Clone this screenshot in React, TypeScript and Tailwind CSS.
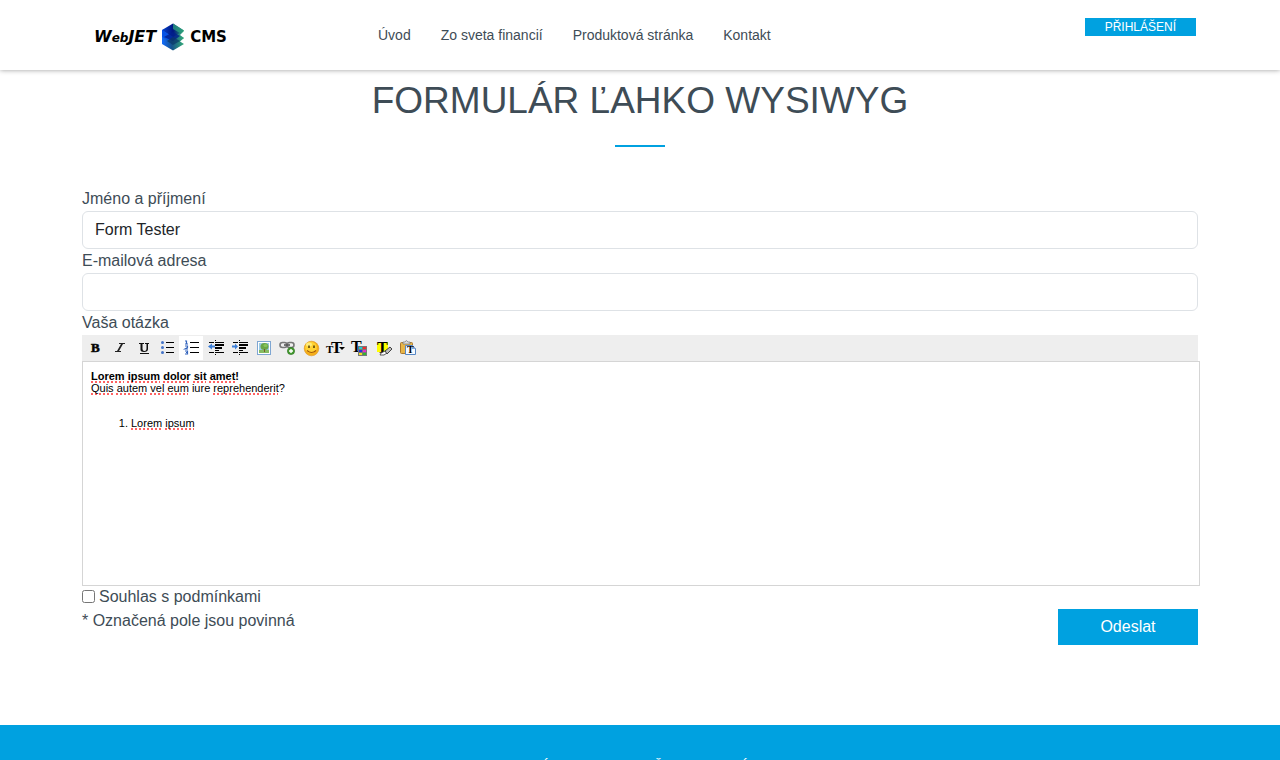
import React from "react";

type Tool = { name: string; icon: React.ReactNode; active?: boolean };

const letter = "font-['Liberation_Serif',serif] font-bold";

function Lines({ xs, w }: { xs: number; w: number[] }) {
  return (
    <>
      {w.map((n, i) => (
        <rect key={i} x={xs} y={2 + i * 5} width={n} height="1" fill="#000" />
      ))}
    </>
  );
}

function IndentLines({ arrow }: { arrow: string }) {
  return (
    <>
      <path d="M7 0h1v1H7zM1 2h5v1H1zM7 2h9v1H7zM7 4h9v2H7zM7 7h7v2H7zM7 10h4v1H7zM1 12h5v1H1zM7 12h9v1H7zM7 14h1v1H7z" fill="#000" />
      <path d={arrow} fill="#3c7fd8" />
    </>
  );
}

const tools: Tool[] = [
  {
    name: "Bold",
    icon: <text x="3" y="12" fontSize="13" stroke="#111" strokeWidth=".6" className={letter}>B</text>,
  },
  {
    name: "Italic",
    icon: <path d="M7 3h6v1h-2L7 11h2v1H3v-1h2l4-7H7z" fill="#222" />,
  },
  {
    name: "Underline",
    icon: (
      <path d="M3 3h5v1H6.500v5q0 2 2 2t2-2V4H9V3h4v1h-1v5q0 3-4 3T4.500 9V4H3zM4 13h9v1H4z" fill="#111" />
    ),
  },
  {
    name: "Bullet list",
    icon: (
      <>
        <Lines xs={6} w={[8, 8, 8]} />
        <g fill="#4474c8">
          <circle cx="2.500" cy="2.500" r="1.500" />
          <circle cx="2.500" cy="7.500" r="1.500" />
          <circle cx="2.500" cy="12.500" r="1.500" />
        </g>
      </>
    ),
  },
  {
    name: "Numbered list",
    active: true,
    icon: (
      <>
        <Lines xs={6} w={[9, 9, 9]} />
        <path d="M1 1h1.500v3M1 4h3M1 6h2.500v1.500L1 9h3M1 11h2.500v3H1M2 12.500h1.500" fill="none" stroke="#3465bd" strokeWidth="1.200" />
      </>
    ),
  },
  { name: "Outdent", icon: <IndentLines arrow="M0 6.500l4-3v2h3v2H4v2z" /> },
  { name: "Indent", icon: <IndentLines arrow="M6 6.500l-3-3v2H0v2h3v2z" /> },
  {
    name: "Image",
    icon: (
      <>
        <rect x="1.500" y="1.500" width="13" height="13" fill="#fff" stroke="#7ea6d2" />
        <path d="M3 3h10v10H3z" fill="#9bcbe5" />
        <path d="M3 10h10v3H3z" fill="#86bb62" />
        <ellipse cx="8.500" cy="6.500" rx="4" ry="3.500" fill="#6aa647" />
        <path d="M8 9h1v3H8z" fill="#765a28" />
        <ellipse cx="9.500" cy="5.500" rx="2" ry="1.500" fill="#85c45b" />
      </>
    ),
  },
  {
    name: "Link",
    icon: (
      <>
        <rect x="0" y="2.500" width="7" height="5" rx="2.500" fill="none" stroke="#777" strokeWidth="1.600" />
        <rect x="7" y="2.500" width="7" height="5" rx="2.500" fill="none" stroke="#777" strokeWidth="1.600" />
        <path d="M4 5h6" stroke="#555" strokeWidth="1.600" />
        <circle cx="11" cy="11" r="3.600" fill="#459b30" stroke="#266f1d" strokeWidth=".6" />
        <path d="M11 9v4M9 11h4" stroke="#fff" strokeWidth="1.400" />
      </>
    ),
  },
  {
    name: "Smiley",
    icon: (
      <>
        <circle cx="7.500" cy="8.500" r="7.300" fill="#f5ae19" stroke="#dd9520" strokeWidth=".6" />
        <circle cx="7" cy="7.500" r="5.800" fill="#ffd335" />
        <ellipse cx="5" cy="4.500" rx="3" ry="2" fill="#ffec78" />
        <path d="M5 5.500v2.500M10 5.500v2.500" stroke="#453000" strokeWidth="1.400" />
        <path d="M3 10.500q4.500 4 9 0" fill="none" stroke="#a45509" strokeWidth="1.100" />
      </>
    ),
  },
  {
    name: "Font size",
    icon: (
      <>
        <text x="-2" y="13" fontSize="11" className={letter}>T</text>
        <text x="3" y="13" fontSize="17" className={letter}>T</text>
        <path d="M11 7h6l-3 3z" />
      </>
    ),
  },
  {
    name: "Text colour",
    icon: (
      <>
        <text x="-1" y="12" fontSize="16" className={letter}>T</text>
        <path d="M6 6h9v10H6z" fill="#777" />
        <path d="M7 7h3v2H7z" fill="#2cc" /><path d="M11 7h3v2h-3z" fill="#f42a2a" />
        <path d="M7 10h3v2H7z" fill="#2432dd" /><path d="M11 10h3v2h-3z" fill="#e42dca" />
        <path d="M7 13h3v2H7z" fill="#f4df20" /><path d="M11 13h3v2h-3z" fill="#31b531" />
      </>
    ),
  },
  {
    name: "Highlight",
    icon: (
      <>
        <path d="M1 2h11v8l-3 2H1z" fill="#ff0" />
        <text x="1" y="13" fontSize="16" className={letter}>T</text>
        <path d="M4 15l1-2 4-2 2 2-3 2z" fill="#fff" stroke="#333" strokeWidth=".8" />
        <path d="M9 11l5-4 2 2-5 5z" fill="#bbb" stroke="#333" strokeWidth=".9" />
      </>
    ),
  },
  {
    name: "Paste text",
    icon: (
      <>
        <rect x=".5" y="2.500" width="12" height="11" rx="1" fill="#e8b546" stroke="#a8772f" />
        <path d="M3 4V2h2q1-3 3 0h2v2z" fill="#ddd" stroke="#777" strokeWidth=".7" />
        <path d="M5.500 5.500h7l3 3v6h-10z" fill="#f5faff" stroke="#5586c5" />
        <path d="M12 5.500v3h3.500" fill="#cce0f8" stroke="#5586c5" strokeWidth=".7" />
        <text x="7" y="13" fontSize="10" className={letter}>T</text>
      </>
    ),
  },
];

function Logo() {
  return (
    <a href="#" aria-label="WebJET CMS" className="flex items-center gap-[5px] font-['DejaVu_Sans',sans-serif] font-bold leading-none text-black">
      <span className="flex items-baseline text-base leading-none italic">
        W<span className="text-xs">eb</span>JET
      </span>
      <svg width="24" height="28" viewBox="0 0 24 28" aria-hidden="true">
        <defs>
          <linearGradient id="lower">
            <stop offset="0" stopColor="#126cff" /><stop offset=".45" stopColor="#16528a" />
            <stop offset="1" stopColor="#35ae78" />
          </linearGradient>
          <linearGradient id="upper">
            <stop offset="0" stopColor="#0543d0" /><stop offset=".5" stopColor="#001780" />
            <stop offset="1" stopColor="#2ca477" />
          </linearGradient>
        </defs>
        <path d="M1 14v7l11 6.500L23 21l-4-2.500 4-3.500-11-4z" fill="url(#lower)" />
        <path d="M1 7v8l11 6 11-6-4-3 4-4-11-4z" fill="url(#lower)" />
        <path d="M1 7l11-6.500L23 7.500 12 14z" fill="url(#upper)" />
        <path d="M1 7l11 7-5 3-6-3z" fill="#0753e6" />
        <path d="M3 14l9-5 7 4-7 5z" fill="#03208c" opacity=".8" />
        <path d="M12 .5L23 7.500l-4 2.500-7-4z" fill="#2c9f7c" opacity=".75" />
        <path d="M6 18l6-4 7 4-7 4z" fill="#0a3768" opacity=".7" />
      </svg>
      <span className="text-[15px] leading-none">CMS</span>
    </a>
  );
}

function Misspelt({ children }: { children: React.ReactNode }) {
  return (
    <span className="underline decoration-[#ff6262] decoration-dotted decoration-2 underline-offset-1 [text-decoration-skip-ink:none]">
      {children}
    </span>
  );
}

const inputClass =
  "block h-[38px] w-full rounded-md border border-[#dee2e6] bg-white px-3 text-base text-[#212529]";

export default function App() {
  return (
    <div className="h-screen overflow-hidden bg-white font-['Liberation_Sans',Arial,sans-serif] text-base text-[#3e4c56]">
      <header className="h-[70px] shadow-[0_0_5px_rgba(0,0,0,0.4)]">
        <div className="mx-auto flex h-full max-w-[1140px] items-center pr-3.5 pl-6">
          <div className="w-[284px] pt-1">
            <Logo />
          </div>
          <nav className="flex flex-1 gap-[30px] text-sm">
            <a href="#">Úvod</a>
            <a href="#">Zo sveta financií</a>
            <a href="#">Produktová stránka</a>
            <a href="#">Kontakt</a>
          </nav>
          <a href="#" className="mt-[18px] self-start bg-[#00a1e0] px-5 text-xs leading-[18px] text-white">
            PŘIHLÁŠENÍ
          </a>
        </div>
      </header>

      <main className="mx-auto max-w-[1140px] px-3 pb-20">
        <h1 className="pt-2 text-center text-[37px] leading-[46px]">FORMULÁR ĽAHKO WYSIWYG</h1>
        <div className="mx-auto mt-[21px] h-0.5 w-[50px] bg-[#00a1e0]" />
        <form className="mt-10" onSubmit={(e) => e.preventDefault()}>
          <label htmlFor="name" className="block leading-6">Jméno a příjmení</label>
          <input id="name" type="text" defaultValue="Form Tester" className={inputClass} />
          <label htmlFor="email" className="block leading-6">E-mailová adresa</label>
          <input id="email" type="email" className={inputClass} />
          <div id="question" className="leading-6">Vaša otázka</div>
          <div role="toolbar" aria-label="Editor" className="flex h-[26px] items-center bg-[#eee] pl-px">
            {tools.map((t) => (
              <button
                key={t.name}
                type="button"
                aria-label={t.name}
                className={t.active ? "flex size-6 items-center justify-center bg-white pl-px" : "flex size-6 items-center justify-center pl-px"}
              >
                <svg width="16" height="16" viewBox="0 0 16 16" className="shrink-0 overflow-visible">{t.icon}</svg>
              </button>
            ))}
          </div>
          <div
            role="textbox"
            aria-multiline="true"
            aria-labelledby="question"
            contentEditable
            suppressContentEditableWarning
            spellCheck={false}
            className="-mr-0.5 h-[225px] border border-[#d5d5d5] px-2 pt-2 text-[11px] leading-3 text-black"
          >
            <p className="font-bold">
              <Misspelt>Lorem</Misspelt> <Misspelt>ipsum</Misspelt> <Misspelt>dolor</Misspelt> <Misspelt>sit</Misspelt> <Misspelt>amet</Misspelt>!
            </p>
            <p>
              <Misspelt>Quis</Misspelt> <Misspelt>autem</Misspelt> <Misspelt>vel</Misspelt> <Misspelt>eum</Misspelt> iure <Misspelt>reprehenderit</Misspelt>?
            </p>
            <ol className="mt-[23px] list-decimal pl-10">
              <li><Misspelt>Lorem</Misspelt> <Misspelt>ipsum</Misspelt></li>
            </ol>
          </div>
          <div className="flex h-[23px] items-center gap-1 pb-0.5">
            <input id="agree" type="checkbox" className="size-[13px]" />
            <label htmlFor="agree" className="leading-6">Souhlas s podmínkami</label>
          </div>
          <div className="flex items-start justify-between">
            <p className="leading-6">* Označená pole jsou povinná</p>
            <button type="submit" className="h-9 w-[140px] bg-[#00a1e0] text-white">Odeslat</button>
          </div>
        </form>
      </main>

      <footer className="bg-[#00a1e0] pt-8 pb-8 text-center text-sm leading-[18px] text-white">
        <p>DEMO STRÁNKA WEBJETU ČESKY I STRÁNKY CMS</p>
      </footer>
    </div>
  );
}
